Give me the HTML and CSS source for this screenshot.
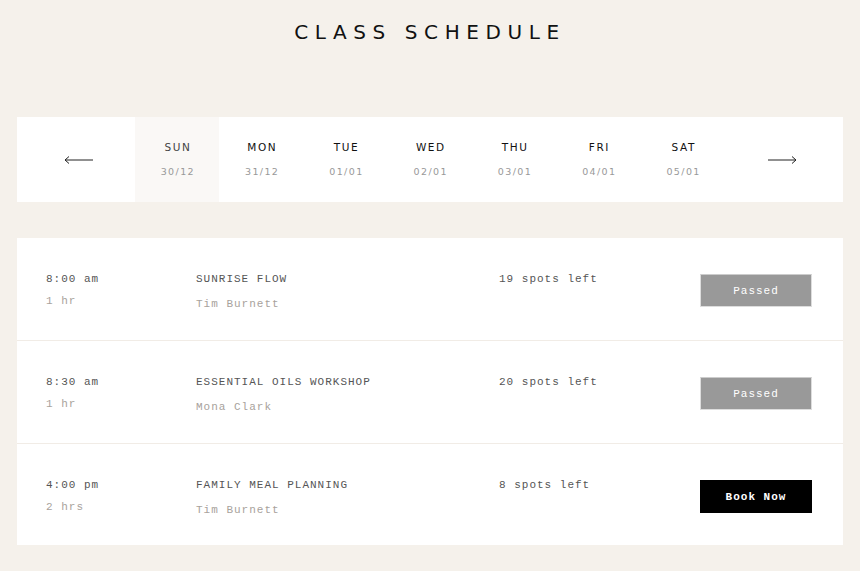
FILE: index.html
```html
<!DOCTYPE html>
<html>
<head>
<meta charset="utf-8">
<link rel="stylesheet" href="styles.css">
</head>
<body>
<h1 class="title">CLASS SCHEDULE</h1>
<div class="week">
  <div class="nav prev"><svg width="30" height="10" viewBox="0 0 30 10"><path d="M1 5H29M5 1.5L1 5L5 8.5" fill="none" stroke="#222" stroke-width="1"/></svg></div>
  <div class="day active"><span class="dname">SUN</span><span class="ddate">30/12</span></div>
  <div class="day"><span class="dname">MON</span><span class="ddate">31/12</span></div>
  <div class="day"><span class="dname">TUE</span><span class="ddate">01/01</span></div>
  <div class="day"><span class="dname">WED</span><span class="ddate">02/01</span></div>
  <div class="day"><span class="dname">THU</span><span class="ddate">03/01</span></div>
  <div class="day"><span class="dname">FRI</span><span class="ddate">04/01</span></div>
  <div class="day"><span class="dname">SAT</span><span class="ddate">05/01</span></div>
  <div class="nav next"><svg width="30" height="10" viewBox="0 0 30 10"><path d="M1 5H29M25 1.5L29 5L25 8.5" fill="none" stroke="#222" stroke-width="1"/></svg></div>
</div>
<div class="list">
  <div class="row">
    <div class="col"><span class="main">8:00 am</span><span class="sub s1">1 hr</span></div>
    <div class="col"><span class="main">SUNRISE FLOW</span><span class="sub s2">Tim Burnett</span></div>
    <div class="col"><span class="main">19 spots left</span></div>
    <div class="col"><span class="btn passed">Passed</span></div>
  </div>
  <div class="row">
    <div class="col"><span class="main">8:30 am</span><span class="sub s1">1 hr</span></div>
    <div class="col"><span class="main">ESSENTIAL OILS WORKSHOP</span><span class="sub s2">Mona Clark</span></div>
    <div class="col"><span class="main">20 spots left</span></div>
    <div class="col"><span class="btn passed">Passed</span></div>
  </div>
  <div class="row">
    <div class="col"><span class="main">4:00 pm</span><span class="sub s1">2 hrs</span></div>
    <div class="col"><span class="main">FAMILY MEAL PLANNING</span><span class="sub s2">Tim Burnett</span></div>
    <div class="col"><span class="main">8 spots left</span></div>
    <div class="col"><span class="btn book">Book Now</span></div>
  </div>
</div>
</body>
</html>
```
FILE: styles.css
```css
html, body { margin: 0; padding: 0; }
body {
  background: #f5f1eb;
  font-family: "Liberation Mono", monospace;
  color: #333;
}
.title {
  margin: 0;
  padding-top: 19px;
  height: 117px;
  box-sizing: border-box;
  text-align: center;
  font-family: "DejaVu Sans", sans-serif;
  font-weight: normal;
  font-size: 20px;
  line-height: 26px;
  letter-spacing: 6.6px;
  color: #111;
}
.week {
  margin: 0 17px;
  height: 85px;
  background: #fff;
  display: grid;
  grid-template-columns: 118px repeat(7, 84.3px) 1fr;
}
.nav {
  display: flex;
  align-items: center;
  justify-content: center;
  padding-top: 1px;
}
.nav.prev { padding-left: 6px; }
.nav.next { padding-right: 5px; }
.day {
  display: flex;
  flex-direction: column;
  align-items: center;
  padding-top: 23px;
}
.day.active { background: #faf8f6; }
.dname {
  font-family: "DejaVu Sans", sans-serif;
  font-size: 10.5px;
  line-height: 14px;
  letter-spacing: 1.6px;
  color: #111;
  padding-left: 1.6px;
}
.day.active .dname { color: #444; }
.ddate {
  margin-top: 12px;
  font-family: "DejaVu Sans", sans-serif;
  font-size: 9.5px;
  line-height: 12px;
  letter-spacing: 1.4px;
  color: #999;
  padding-left: 1.4px;
}
.list {
  margin: 36px 17px 0;
  background: #fff;
}
.row {
  display: grid;
  grid-template-columns: 150px 303px 1fr 112px;
  padding: 0 31px 0 29px;
  height: 103px;
  box-sizing: border-box;
  border-bottom: 1px solid #f1ece6;
}
.row:last-child { border-bottom: none; height: 101px; }
.col {
  display: flex;
  flex-direction: column;
  padding-top: 34px;
}
.main {
  font-size: 11px;
  line-height: 14px;
  letter-spacing: 1px;
  color: #555;
}
.sub {
  font-size: 11px;
  line-height: 14px;
  letter-spacing: 1px;
  color: #a8a29c;
}
.s1 { margin-top: 8px; }
.s2 { margin-top: 11px; }
.btn {
  margin-top: 2px;
  height: 33px;
  display: flex;
  align-items: center;
  justify-content: center;
  font-size: 11px;
  letter-spacing: 1px;
  color: #fff;
  box-sizing: border-box;
}
.btn.passed { background: #999; border: 1px solid #ddd; border-top-color: #ccc; }
.btn.book { background: #000; font-weight: bold; }
```
